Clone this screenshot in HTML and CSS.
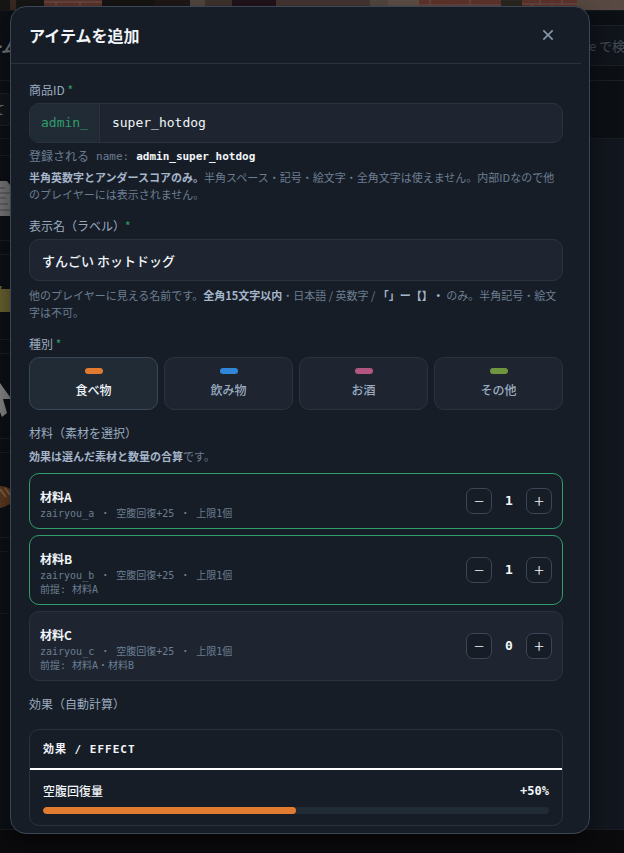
FILE: index.html
```
<!DOCTYPE html>
<html lang="ja">
<head>
  <meta charset="UTF-8">
  <meta name="viewport" content="width=device-width, initial-scale=1.0">
  <title>アイテムを追加</title>
  <link rel="stylesheet" href="styles.css">
</head>
<body>

<!-- shop page behind the dialog -->
<div class="page">
  <svg class="photo" viewBox="0 0 624 10" preserveAspectRatio="none" aria-hidden="true">
    <rect width="624" height="10" fill="#40342f"/>
    <rect width="44" height="10" fill="#161614"/>
    <rect x="10" width="6" height="10" fill="#3a2822"/>
    <rect x="44" width="58" height="10" fill="#60352c"/>
    <path d="M44 2h58M44 7h58M56 2v5M80 2v5M68 7v3M92 7v3" stroke="#6d5850" fill="none"/>
    <rect x="102" width="52" height="10" fill="#171513"/>
    <rect x="154" width="36" height="10" fill="#1f1718"/>
    <rect x="190" width="15" height="10" fill="#544841"/>
    <rect x="205" width="27" height="10" fill="#41342f"/>
    <rect x="232" width="44" height="10" fill="#21131a"/>
    <rect x="276" width="94" height="10" fill="#453733"/>
    <rect x="370" width="18" height="10" fill="#554942"/>
    <rect x="388" width="31" height="10" fill="#605148"/>
    <rect x="419" width="82" height="10" fill="#60352c"/>
    <path d="M419 5h82M430 0v5M470 0v5M452 5v5M488 5v5" stroke="#6d5850" fill="none"/>
    <rect x="501" width="21" height="10" fill="#2a2820"/>
    <rect x="522" width="55" height="10" fill="#60352c"/>
    <path d="M522 4h55M540 0v4M562 0v4M532 4v6M552 4v6" stroke="#6d5850" fill="none"/>
    <rect x="577" width="47" height="10" fill="#584a42"/>
  </svg>

  <div class="shop">
    <div class="shop-head">
      <div class="shop-title">ーム</div>
      <input class="shop-search" type="text" placeholder="e で検索" aria-label="検索">
    </div>
    <div class="shop-tabs"><span class="pill">て</span></div>
    <div class="shop-main">
      <div class="shop-list">
        <div class="thumb">
          <svg viewBox="0 0 10 85"><path d="M0 25h7l3 4v31H0z" fill="#777"/><path d="M0 32h5M0 37h10M0 42h6M0 48h8M0 54h10" stroke="#4b4b4b"/></svg>
        </div>
        <div class="thumb">
          <svg viewBox="0 0 10 85"><path d="M0 31h2l-1 3h9v23H0z" fill="#68622f"/></svg>
        </div>
        <div class="thumb">
          <svg viewBox="0 0 10 85"><path d="M0 29l10 14v2H3l4 14-5 4-2-5z" fill="#858585"/></svg>
        </div>
        <div class="thumb">
          <svg viewBox="0 0 10 85"><path d="M0 33q6 0 10 3v15q-5 3-10 4z" fill="#5b3820"/><path d="M0 36l6 8M5 35l5 7" stroke="#806241" stroke-width="2"/></svg>
        </div>
        <div class="thumb empty"></div>
      </div>
      <div class="shop-side"></div>
    </div>
  </div>
</div>

<div class="overlay">
  <form class="modal" role="dialog" aria-labelledby="modalTitle" onsubmit="return false">
    <div class="modal-head">
      <h1 id="modalTitle">アイテムを追加</h1>
      <button type="button" class="close" aria-label="閉じる">
        <svg viewBox="0 0 12 12"><path d="M2 2l8 8M10 2l-8 8"/></svg>
      </button>
    </div>

    <div class="modal-body">
      <div class="field">
        <label for="itemId">商品ID <span class="req">*</span></label>
        <div class="id-box">
          <span class="prefix">admin_</span>
          <input id="itemId" type="text" value="super_hotdog" spellcheck="false">
        </div>
        <p class="full-name"><span class="ja">登録される</span><span>name:</span><b>admin_super_hotdog</b></p>
        <p class="hint"><b>半角英数字とアンダースコアのみ。</b>半角スペース・記号・絵文字・全角文字は使えません。内部IDなので他のプレイヤーには表示されません。</p>
      </div>

      <div class="field">
        <label for="itemLabel">表示名（ラベル）<span class="req">*</span></label>
        <input id="itemLabel" class="text-box" type="text" value="すんごい ホットドッグ">
        <p class="hint spaced">他のプレイヤーに見える名前です。<b>全角15文字以内</b>・日本語 / 英数字 / <b>「」ー【】・</b> のみ。半角記号・絵文字は不可。</p>
      </div>

      <div class="field">
        <div class="label" id="kindLabel">種別 <span class="req">*</span></div>
        <div class="kinds" role="group" aria-labelledby="kindLabel">
          <button type="button" class="kind active" aria-pressed="true"><i class="chip food"></i>食べ物</button>
          <button type="button" class="kind" aria-pressed="false"><i class="chip drink"></i>飲み物</button>
          <button type="button" class="kind" aria-pressed="false"><i class="chip alcohol"></i>お酒</button>
          <button type="button" class="kind" aria-pressed="false"><i class="chip other"></i>その他</button>
        </div>
      </div>

      <div class="field">
        <div class="label">材料（素材を選択）</div>
        <p class="hint"><b>効果は選んだ素材と数量の合算</b>です。</p>
        <div class="materials">
          <div class="material selected">
            <div class="material-info">
              <h2>材料A</h2>
              <p>zairyou_a ・ 空腹回復+25 ・ 上限1個</p>
            </div>
            <div class="stepper">
              <button type="button" aria-label="減らす">−</button><output>1</output><button type="button" aria-label="増やす">+</button>
            </div>
          </div>
          <div class="material selected">
            <div class="material-info">
              <h2>材料B</h2>
              <p>zairyou_b ・ 空腹回復+25 ・ 上限1個</p>
              <p>前提: 材料A</p>
            </div>
            <div class="stepper">
              <button type="button" aria-label="減らす">−</button><output>1</output><button type="button" aria-label="増やす">+</button>
            </div>
          </div>
          <div class="material">
            <div class="material-info">
              <h2>材料C</h2>
              <p>zairyou_c ・ 空腹回復+25 ・ 上限1個</p>
              <p>前提: 材料A・材料B</p>
            </div>
            <div class="stepper">
              <button type="button" aria-label="減らす">−</button><output>0</output><button type="button" aria-label="増やす">+</button>
            </div>
          </div>
        </div>
      </div>

      <div class="field">
        <div class="label">効果（自動計算）</div>
        <div class="effect">
          <div class="effect-head">効果 / EFFECT</div>
          <div class="effect-body">
            <div class="effect-row"><span>空腹回復量</span><b>+50%</b></div>
            <div class="bar"><div class="bar-fill" style="width: 50%"></div></div>
          </div>
        </div>
      </div>
    </div>
  </form>
</div>

</body>
</html>
```
FILE: styles.css
```
:root {
  --sans: "Noto Sans CJK JP", sans-serif;
  --mono: "DejaVu Sans Mono", "Noto Sans CJK JP", monospace;
  --bg: #171d26;
  --panel: #1e2530;
  --panel-2: #212b36;
  --line: #2a323e;
  --line-2: #3b4756;
  --text: #f1f5f9;
  --muted: #9aabc0;
  --dim: #6b7d92;
  --green: #2f9e6b;
}

* { margin: 0; padding: 0; box-sizing: border-box; }

body {
  position: relative;
  min-height: 100vh;
  background: #0b0a0c;
  color: var(--text);
  font-family: var(--sans);
  font-size: 12px;
  line-height: 18px;
}

button, input { font: inherit; color: inherit; }
button { cursor: pointer; }
input { outline: none; }

/* page behind */
.page {
  position: absolute;
  inset: 0;
  display: flex;
  flex-direction: column;
  padding-bottom: 23px;
  overflow: hidden;
}

.photo { display: block; width: 100%; height: 10px; }

.shop {
  flex: 1;
  display: flex;
  flex-direction: column;
  background: #0c1015;
  border-top: 1px solid #151b22;
  border-bottom: 1px solid #171d22;
}

.shop-head {
  display: flex;
  align-items: center;
  justify-content: space-between;
  height: 70px;
  border-bottom: 1px solid #1a2026;
}

.shop-title {
  display: flex;
  justify-content: flex-end;
  width: 17px;
  overflow: hidden;
  color: #777b80;
  font-size: 16px;
  font-weight: 700;
  font-style: italic;
  white-space: nowrap;
}

.shop-search {
  width: 54px;
  height: 41px;
  padding-left: 18px;
  background: #10141b;
  border: 1px solid #1a2026;
  border-right: 0;
  font-size: 13px;
}
.shop-search::placeholder { color: #454d57; }

.shop-tabs {
  display: flex;
  align-items: center;
  height: 58px;
  border-bottom: 1px solid #181d23;
}

.pill {
  display: flex;
  align-items: center;
  width: 20px;
  height: 33px;
  background: #11161c;
  border: 1px solid #1c232a;
  border-left: 0;
  border-radius: 0 16px 16px 0;
  color: #6d7278;
  text-indent: -7px;
  overflow: hidden;
}

.shop-main { flex: 1; display: flex; justify-content: space-between; }

.shop-list {
  display: flex;
  flex-direction: column;
  gap: 13px;
  width: 12px;
  padding-top: 16px;
}

.thumb {
  height: 86px;
  border: solid #1a2026;
  border-width: 1px 0;
}
.thumb svg { display: block; width: 10px; height: 85px; fill: none; }
.thumb.empty { height: 63px; border-style: dashed; }

.shop-side { width: 40px; background: #12161e; }

/* dialog */
.overlay {
  position: relative;
  padding: 6px 34px 19px 10px;
}

.modal {
  padding-right: 8px;
  background: var(--bg);
  border: 1px solid var(--line-2);
  border-radius: 16px;
  box-shadow: 0 8px 24px rgba(0, 0, 0, 0.5);
}

.modal-head {
  display: flex;
  align-items: center;
  justify-content: space-between;
  height: 57px;
  padding: 0 18px;
  border-bottom: 1px solid #29323d;
}

h1 { font-size: 16px; line-height: 24px; }

.close {
  display: flex;
  align-items: center;
  justify-content: center;
  width: 30px;
  height: 30px;
  background: none;
  border: 0;
}
.close svg { width: 14px; height: 14px; fill: none; stroke: #8496a9; stroke-width: 1.4; }

.modal-body {
  display: flex;
  flex-direction: column;
  gap: 14px;
  padding: 17px 18px 7px;
}

.field label, .label {
  display: block;
  margin-bottom: 4px;
  color: var(--muted);
}
.req { color: var(--green); }

.id-box {
  display: flex;
  height: 40px;
  background: var(--panel);
  border: 1px solid var(--line);
  border-radius: 10px;
  overflow: hidden;
  font-family: var(--mono);
  font-size: 13px;
}

.prefix {
  display: flex;
  align-items: center;
  padding: 0 11px;
  background: var(--panel-2);
  border-right: 1px solid var(--line);
  color: var(--green);
}

.id-box input {
  flex: 1;
  min-width: 0;
  padding: 0 12px;
  background: none;
  border: 0;
}

.text-box {
  display: block;
  width: 100%;
  height: 42px;
  padding: 0 12px;
  background: var(--panel);
  border: 1px solid var(--line);
  border-radius: 10px;
  font-size: 13px;
  font-weight: 500;
}

.full-name {
  display: flex;
  gap: 7px;
  margin-top: 5px;
  color: var(--dim);
  font-family: var(--mono);
  font-size: 11px;
}
.full-name b { color: var(--text); }
.full-name .ja { font-size: 12px; }

.hint {
  margin-top: 3px;
  color: var(--dim);
  font-size: 11px;
  line-height: 17px;
  text-spacing-trim: space-all;
}
.hint b { color: #a5b5ca; }
.hint.spaced, .label + .hint { margin-top: 6px; }

.kinds {
  display: grid;
  grid-template-columns: repeat(4, 1fr);
  gap: 6px;
}

.kind {
  display: flex;
  flex-direction: column;
  align-items: center;
  gap: 7px;
  height: 53px;
  padding-top: 10px;
  background: var(--panel);
  border: 1px solid var(--line);
  border-radius: 10px;
  color: var(--muted);
  font-weight: 500;
}
.kind.active {
  background: var(--panel-2);
  border-color: var(--line-2);
  color: var(--text);
}

.chip { width: 18px; height: 6px; border-radius: 3px; }
.food { background: #e07b30; }
.drink { background: #3087d8; }
.alcohol { background: #b3567f; }
.other { background: #6f963f; }

.materials {
  display: flex;
  flex-direction: column;
  gap: 6px;
  margin-top: 8px;
}

.material {
  display: flex;
  align-items: center;
  justify-content: space-between;
  padding: 0 10px;
  background: var(--panel);
  border: 1px solid var(--line);
  border-radius: 10px;
}
.material.selected { background: var(--bg); border-color: var(--green); }

.material-info { padding: 12px 0 7px; }
.material-info h2 { font-size: 12px; line-height: 21px; }
.material-info p {
  height: 14px;
  color: var(--dim);
  font-family: var(--mono);
  font-size: 10px;
  line-height: 14px;
}

.stepper { display: flex; align-items: center; }
.stepper button {
  display: flex;
  align-items: center;
  justify-content: center;
  width: 26px;
  height: 26px;
  padding-bottom: 2px;
  background: var(--bg);
  border: 1px solid var(--line-2);
  border-radius: 7px;
  font-size: 18px;
  font-weight: 300;
}
.stepper output {
  width: 34px;
  text-align: center;
  font-family: var(--mono);
  font-size: 13px;
  font-weight: 700;
}

.effect {
  margin-top: 16px;
  border: 1px solid var(--line);
  border-radius: 10px;
}

.effect-head {
  display: flex;
  align-items: center;
  height: 40px;
  padding: 2px 13px 0;
  border-bottom: 2px solid #fff;
  font-family: var(--mono);
  font-size: 11px;
  font-weight: 700;
  letter-spacing: 1px;
}

.effect-body { padding: 12px 13px 11px; }

.effect-row {
  display: flex;
  justify-content: space-between;
  margin-bottom: 7px;
  font-weight: 500;
}
.effect-row b { font-family: var(--mono); }

.bar { height: 7px; background: var(--panel-2); border-radius: 4px; overflow: hidden; }
.bar-fill { height: 100%; background: #e07b30; border-radius: 4px; }
```
